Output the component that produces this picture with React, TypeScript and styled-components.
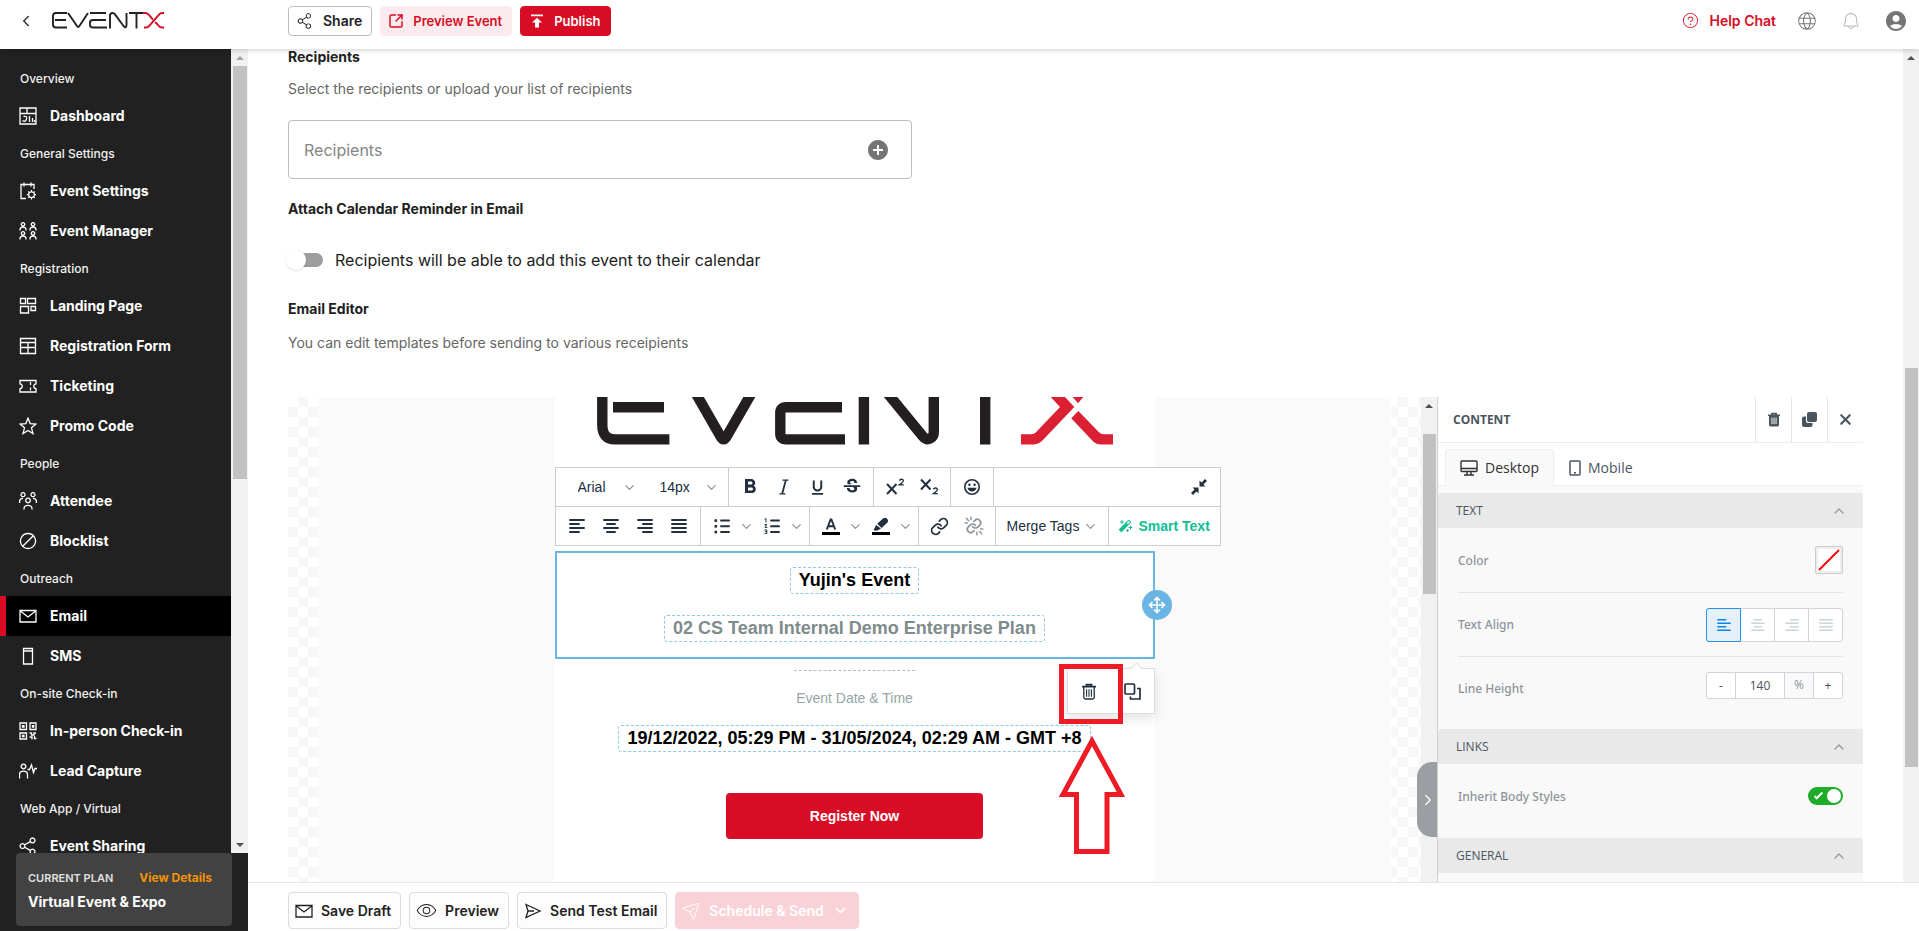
import React from 'react';
import styled, { createGlobalStyle, css } from 'styled-components';
import { ChevronDown, ChevronLeft, ChevronRight, ChevronUp, Link, X, SquareArrowOutUpRight } from 'lucide-react';
import { MdFormatBold, MdFormatUnderlined, MdStrikethroughS, MdAccountCircle, MdAddCircle } from 'react-icons/md';
import { PiBellLight, PiGlobeLight, PiQuestionLight, PiShareNetworkLight, PiPaperPlaneTiltLight, PiEyeLight, PiMagicWandFill } from 'react-icons/pi';

const ui = 'Inter, "DM Sans", sans-serif';
const arial = '"Liberation Sans", Arial, sans-serif';
const panelFont = '"Open Sans", "Noto Sans", sans-serif';
const red = '#d80c24';
const ink = '#222f3e';

const GlobalStyle = createGlobalStyle`
  *, *::before, *::after { box-sizing: border-box; }
  body { margin: 0; background: #fff; font-family: ${ui}; color: #212121; overflow: hidden; }
  button, input, select { font: inherit; color: inherit; }
  button { margin: 0; padding: 0; border: 0; background: none; cursor: pointer; }
  h2, h3, p { margin: 0; }
  svg { display: block; flex: none; }
`;

const Page = styled.div`
  display: flex;
  flex-direction: column;
  height: 100vh;
`;

/* ---------- header ---------- */
const Header = styled.header`
  position: relative;
  z-index: 2;
  display: flex;
  align-items: center;
  height: 49px;
  padding: 0 11px 8px 0;
  background: #fff;
  box-shadow: 0 1px 6px rgba(0, 0, 0, 0.2);
`;
const Brand = styled.div`
  display: flex;
  align-items: center;
  gap: 17px;
  width: 288px;
  padding-left: 17px;
  color: #333;
`;
const HeaderActions = styled.div`
  display: flex;
  gap: 8px;
  padding-top: 1px;
`;
const HeaderTools = styled.div`
  display: flex;
  align-items: center;
  gap: 23px;
  margin-left: auto;
  color: #757575;
`;
const IconButton = styled.button`
  display: flex;
`;
const HelpLink = styled.a`
  display: flex;
  align-items: center;
  gap: 9px;
  margin-right: -3px;
  color: ${red};
  font-size: 14px;
  font-weight: 600;
  line-height: 20px;
  text-decoration: none;
`;

type Tone = 'outline' | 'tint' | 'solid' | 'faded';
const tones = {
  outline: css`border: 1px solid #bdbdbd; background: #fff;`,
  tint: css`border: 1px solid #fcebee; background: #fcebee; color: ${red};`,
  solid: css`border: 1px solid ${red}; background: ${red}; color: #fff;`,
  faded: css`border: 1px solid #f8d2d7; background: #f8d2d7; color: #fff;`,
};
const ActionButton = styled.button<{ $tone: Tone; $tall?: boolean; $small?: boolean }>`
  display: flex;
  align-items: center;
  gap: ${p => (p.$tall ? 8 : 9)}px;
  height: ${p => (p.$tall ? 37 : 30)}px;
  padding: ${p => (p.$tall ? '0 9px 0 6px' : '0 9px 0 7px')};
  border-radius: 4px;
  font-size: ${p => (p.$small ? 13 : 14)}px;
  font-weight: 600;
  line-height: 20px;
  white-space: nowrap;
  ${p => tones[p.$tone]}
  ${p => p.$tall && p.$tone === 'outline' && css`border-color: #dcdcdc; background: #fdfdfd;`}
`;

/* ---------- sidebar ---------- */
const Body = styled.div`
  display: flex;
  flex: 1;
  min-height: 0;
`;
const Sidebar = styled.aside`
  display: flex;
  flex-direction: column;
  width: 248px;
  background: #212121;
`;
const NavRow = styled.div`
  display: flex;
  flex: 1;
  min-height: 0;
`;
const Nav = styled.nav`
  flex: 1;
  padding-top: 12px;
  overflow: hidden;
  color: #fff;
`;
const NavHeading = styled.h3`
  padding-left: 20px;
  font-size: 12px;
  font-weight: 500;
  line-height: 35px;
  color: #f2f2f2;
`;
const NavItem = styled.a<{ $active?: boolean }>`
  display: flex;
  align-items: center;
  gap: 13px;
  height: 40px;
  padding-left: ${p => (p.$active ? 13 : 19)}px;
  border-left: ${p => (p.$active ? `6px solid ${red}` : '0')};
  background: ${p => (p.$active ? '#000' : 'transparent')};
  color: #fff;
  font-size: 14px;
  font-weight: 700;
  line-height: 20px;
  text-decoration: none;
`;
const PlanArea = styled.div`
  height: 78px;
  padding: 0 16px 5px;
`;
const PlanCard = styled.div`
  display: flex;
  flex-direction: column;
  justify-content: center;
  gap: 4px;
  height: 73px;
  padding: 0 20px 0 12px;
  border-radius: 4px;
  background: #424242;
  color: #fff;
`;
const PlanTop = styled.div`
  display: flex;
  justify-content: space-between;
  align-items: center;
`;
const PlanLabel = styled.span`
  font-size: 11px;
  font-weight: 600;
  line-height: 20px;
  color: #e0e0e0;
`;
const PlanLink = styled.a`
  font-size: 12px;
  font-weight: 700;
  line-height: 20px;
  color: #f59300;
  text-decoration: none;
`;
const PlanName = styled.span`
  font-size: 14px;
  font-weight: 700;
  line-height: 20px;
`;

/* ---------- scroll bars ---------- */
const Track = styled.div<{ $wide?: boolean }>`
  display: flex;
  flex-direction: column;
  flex: none;
  width: ${p => (p.$wide ? 17 : 16)}px;
  background: #f1f1f1;
`;
const Arrow = styled.span<{ $down?: boolean; $dim?: boolean }>`
  height: 17px;
  display: flex;
  align-items: center;
  justify-content: center;
  &::after {
    content: '';
    border: 4px solid transparent;
    border-top-width: ${p => (p.$down ? 4 : 0)}px;
    border-bottom-width: ${p => (p.$down ? 0 : 4)}px;
    border-top-color: ${p => (p.$down ? '#505050' : 'transparent')};
    border-bottom-color: ${p => (p.$down ? 'transparent' : p.$dim ? '#a3a3a3' : '#505050')};
  }
`;
const Rail = styled.span<{ $grow: number }>`
  flex: ${p => p.$grow} 0 0;
`;
const Thumb = styled.span<{ $grow: number }>`
  flex: ${p => p.$grow} 0 0;
  margin: 0 1px 0 2px;
  background: #c1c1c1;
`;
interface ScrollTrackProps {
  before: number;
  thumb: number;
  after: number;
  wide?: boolean;
}
function ScrollTrack({ before, thumb, after, wide }: ScrollTrackProps) {
  return (
    <Track aria-hidden="true" $wide={wide}>
      <Arrow $dim={before === 0} />
      <Rail $grow={before} />
      <Thumb $grow={thumb} />
      <Rail $grow={after} />
      {wide && <Arrow $down />}
    </Track>
  );
}

/* ---------- main column ---------- */
const Main = styled.main`
  display: flex;
  flex-direction: column;
  flex: 1;
  min-width: 0;
`;
const ScrollArea = styled.div`
  display: flex;
  flex: 1;
  min-height: 0;
`;
const Content = styled.div`
  display: flex;
  flex-direction: column;
  flex: 1;
  min-width: 0;
  padding: 0 40px;
`;
const Field = styled.section`
  display: flex;
  flex-direction: column;
  align-items: flex-start;
  margin-bottom: 22px;
`;
const FieldTitle = styled.h2`
  font-size: 14px;
  font-weight: 700;
  line-height: 16px;
`;
const FieldHint = styled.p<{ $loose?: boolean }>`
  margin-top: ${p => (p.$loose ? 16 : 14)}px;
  font-size: 14px;
  line-height: 20px;
  color: #666;
`;
const RecipientsBox = styled.div`
  display: flex;
  align-items: center;
  width: 624px;
  height: 59px;
  margin-top: 21px;
  padding: 0 21px 0 15px;
  border: 1px solid #bdbdbd;
  border-radius: 4px;
  color: #757575;
`;
const RecipientsInput = styled.input`
  flex: 1;
  padding: 0;
  border: 0;
  outline: 0;
  background: none;
  font-size: 16px;
  line-height: 20px;
  &::placeholder { color: #858585; opacity: 1; }
`;
const SwitchLabel = styled.label`
  display: flex;
  align-items: center;
  gap: 12px;
  height: 20px;
  margin: 33px 0 9px;
  font-size: 16px;
  line-height: 20px;
`;
const Switch = styled.input`
  appearance: none;
  display: flex;
  align-items: center;
  width: 35px;
  height: 14px;
  margin: 0;
  border-radius: 7px;
  background: #9e9e9e;
  &::before {
    content: '';
    width: 20px;
    height: 20px;
    margin-left: -2px;
    border-radius: 50%;
    background: #fff;
    box-shadow: 0 1px 3px rgba(0, 0, 0, 0.12);
  }
`;

/* ---------- email editor ---------- */
const Editor = styled.section`
  display: flex;
  flex: 1;
  min-height: 0;
  margin-top: 22px;
  overflow: hidden;
`;
const Checker = styled.div`
  position: relative;
  display: flex;
  flex: 1;
  min-width: 0;
  padding: 0 30px;
  background: conic-gradient(#f7f7f7 0 25%, #fff 0 50%, #f7f7f7 0 75%, #fff 0) 0 0 / 20px 20px;
`;
const Backdrop = styled.div`
  display: flex;
  flex: 1;
  justify-content: center;
  background: #fafafa;
`;
const EmailBody = styled.div`
  position: relative;
  display: flex;
  flex-direction: column;
  align-items: center;
  width: 600px;
  background: #fff;
  font-family: ${arial};
`;
const SelectedBlock = styled.div`
  position: relative;
  display: flex;
  flex-direction: column;
  align-items: center;
  gap: 21px;
  align-self: stretch;
  flex: none;
  height: 108px;
  margin-top: 106px;
  padding-top: 14px;
  border: 2px solid #6bb5e5;
`;
const MergeField = styled.span<{ $muted?: boolean; $spaced?: boolean }>`
  margin-top: ${p => (p.$spaced ? 17 : 0)}px;
  padding: 0 8px;
  border: 1px dashed #8fc9ea;
  border-radius: 3px;
  font-size: 18px;
  font-weight: 700;
  line-height: 25px;
  color: ${p => (p.$muted ? '#7e8c8d' : '#000')};
`;
const MoveHandle = styled.button`
  position: absolute;
  right: -19px;
  top: 37px;
  display: flex;
  align-items: center;
  justify-content: center;
  width: 30px;
  height: 30px;
  border-radius: 50%;
  background: #6bb5e5;
  color: #fff;
`;
const BlockMenu = styled.div`
  position: absolute;
  right: -2px;
  top: 115px;
  display: flex;
  width: 88px;
  height: 46px;
  border: 1px solid #ddd;
  background: #fff;
  box-shadow: 0 4px 12px rgba(0, 0, 0, 0.12);
  color: ${ink};
  &::before {
    content: '';
    position: absolute;
    right: 13px;
    top: -5px;
    width: 9px;
    height: 9px;
    border: 1px solid #ddd;
    border-right: 0;
    border-bottom: 0;
    background: #fff;
    transform: rotate(45deg);
  }
`;
const MenuButton = styled.button`
  display: flex;
  flex: 1;
  align-items: center;
  justify-content: center;
`;
const DashedRule = styled.div`
  width: 121px;
  margin-top: 11px;
  border-top: 1px dashed #bbb;
`;
const DateCaption = styled.p`
  margin-top: 17px;
  font-size: 14px;
  line-height: 20px;
  color: #95a5a6;
`;
const RegisterButton = styled.button`
  width: 257px;
  height: 46px;
  margin-top: 41px;
  flex: none;
  border-radius: 4px;
  background: ${red};
  color: #fff;
  font-size: 14px;
  font-weight: 700;
  line-height: 20px;
`;
const Highlight = styled.div`
  position: absolute;
  left: 504px;
  top: 267px;
  width: 64px;
  height: 60px;
  border: 5px solid #ed1c24;
`;
const Pointer = styled.svg`
  position: absolute;
  left: 502px;
  top: 338px;
`;

/* text tool bar */
const TextToolbar = styled.div`
  position: absolute;
  left: 0;
  top: 70px;
  width: 666px;
  border: 1px solid #ccc;
  background: #fff;
  color: ${ink};
`;
const ToolRow = styled.div`
  display: flex;
  height: 38px;
  & + & { height: 39px; border-top: 1px solid #ccc; }
`;
const ToolGroup = styled.div<{ $fill?: boolean }>`
  display: flex;
  flex: ${p => (p.$fill ? '1' : 'none')};
  justify-content: ${p => (p.$fill ? 'flex-end' : 'flex-start')};
  padding: 0 4px;
  border-right: 1px solid #ccc;
  &:last-child { border-right: 0; }
`;
const Tool = styled.button<{ $disabled?: boolean }>`
  display: flex;
  align-items: center;
  justify-content: center;
  width: 34px;
  color: ${p => (p.$disabled ? '#909599' : 'inherit')};
`;
const ToolArrow = styled.button`
  display: flex;
  align-items: center;
  justify-content: center;
  width: 16px;
  color: #8d949b;
`;
const TextTool = styled.button<{ $accent?: boolean }>`
  display: flex;
  align-items: center;
  gap: ${p => (p.$accent ? 6 : 4)}px;
  width: 104px;
  padding-left: ${p => (p.$accent ? 4 : 7)}px;
  font-size: 14px;
  font-weight: ${p => (p.$accent ? 700 : 400)};
  line-height: 20px;
  white-space: nowrap;
  color: ${p => (p.$accent ? '#13bd92' : 'inherit')};
`;
const Picker = styled.span`
  display: grid;
  grid-template-columns: 1fr 24px;
  align-items: center;
  justify-items: center;
  width: 82px;
  color: #8d949b;
`;
const PickerSelect = styled.select`
  grid-area: 1 / 1 / 2 / 3;
  width: 100%;
  height: 38px;
  padding: 0 0 0 18px;
  border: 0;
  outline: 0;
  appearance: none;
  background: none;
  font-size: 14px;
  color: ${ink};
`;
const PickerArrow = styled(ChevronDown)`
  grid-area: 1 / 2;
  pointer-events: none;
`;

/* ---------- property panel ---------- */
const CollapseTab = styled.button`
  position: absolute;
  right: -16px;
  bottom: 45px;
  z-index: 1;
  display: flex;
  align-items: center;
  justify-content: center;
  width: 20px;
  height: 75px;
  padding-left: 2px;
  border-radius: 15px 0 0 15px;
  background: #9b9fa4;
  color: #fff;
`;
const Panel = styled.aside`
  display: flex;
  flex-direction: column;
  flex: none;
  width: 426px;
  border-left: 1px solid #d0d0d0;
  background: #f9f9f9;
  font-family: ${panelFont};
  color: #4a555f;
`;
const PanelHead = styled.div`
  display: flex;
  align-items: stretch;
  flex: none;
  height: 46px;
  border-bottom: 1px solid #eee;
  background: #fff;
`;
const PanelTitle = styled.h2`
  flex: 1;
  padding-left: 15px;
  font-size: 12px;
  font-weight: 700;
  line-height: 45px;
`;
const PanelAction = styled.button`
  display: flex;
  align-items: center;
  justify-content: center;
  width: 36px;
  border-left: 1px solid #e5e5e5;
`;
const Tabs = styled.div`
  display: flex;
  align-items: flex-end;
  flex: none;
  height: 43px;
  margin-bottom: 7px;
  padding-left: 7px;
  border-bottom: 1px solid #eee;
  background: #fff;
`;
const Tab = styled.button<{ $active?: boolean }>`
  display: flex;
  align-items: center;
  gap: 7px;
  height: 37px;
  margin-bottom: -1px;
  padding: 0 14px;
  border: 1px solid ${p => (p.$active ? '#eee' : 'transparent')};
  border-bottom: 0;
  border-radius: 4px 4px 0 0;
  background: ${p => (p.$active ? '#f9f9f9' : 'transparent')};
  font-size: 14px;
  line-height: 20px;
  color: ${p => (p.$active ? '#333' : '#4a555f')};
`;
const SectionHead = styled.button`
  display: flex;
  align-items: center;
  justify-content: space-between;
  flex: none;
  height: 35px;
  padding: 0 16px 0 18px;
  border-radius: 2px 2px 0 0;
  background: #e9e9e9;
  font-size: 12px;
  line-height: 20px;
`;
const Rows = styled.div<{ $end: number }>`
  flex: none;
  padding: 0 20px ${p => p.$end}px;
`;
const Property = styled.div`
  display: flex;
  align-items: center;
  justify-content: space-between;
  height: 64px;
  font-family: "Noto Sans", ${panelFont};
  font-size: 12px;
  font-weight: 500;
  color: #8d9499;
  & + & { border-top: 1px solid #e3e5e8; }
`;
const Swatch = styled.button`
  width: 28px;
  height: 28px;
  padding: 2px;
  border: 1px solid #ccc;
  border-radius: 2px;
  background: #eee;
`;
const Segments = styled.div`
  display: flex;
  height: 34px;
`;
const Segment = styled.button<{ $active?: boolean }>`
  display: flex;
  align-items: center;
  justify-content: center;
  width: 35px;
  margin-left: -1px;
  position: relative;
  z-index: ${p => (p.$active ? 1 : 0)};
  border: 1px solid ${p => (p.$active ? '#2490e6' : '#ced4da')};
  background: ${p => (p.$active ? '#e5f0f9' : '#fff')};
  color: ${p => (p.$active ? '#0b84ee' : '#ced4da')};
  &:first-child { border-radius: 3px 0 0 3px; }
  &:last-child { border-radius: 0 3px 3px 0; }
`;
const Stepper = styled.div`
  display: flex;
  height: 27px;
  margin-bottom: 6px;
  border: 1px solid #ced4da;
  border-radius: 3px;
  background: #fff;
  font-family: ${panelFont};
  font-weight: 400;
  color: #495057;
  overflow: hidden;
`;
const StepButton = styled.button`
  width: 28px;
`;
const StepInput = styled.input`
  width: 50px;
  padding: 0;
  border: solid #ced4da;
  border-width: 0 1px;
  outline: 0;
  text-align: center;
`;
const StepUnit = styled.span`
  width: 29px;
  border-right: 1px solid #ced4da;
  background: #f9f9f9;
  line-height: 24px;
  text-align: center;
  color: #8d9499;
`;
const GreenSwitch = styled.input`
  appearance: none;
  display: flex;
  align-items: center;
  justify-content: flex-end;
  width: 35px;
  height: 18px;
  margin: 0;
  border-radius: 9px;
  background: #1eac2a;
  &::before {
    content: '';
    width: 9px;
    height: 4px;
    margin: 0 4px 3px 0;
    border: solid #fff;
    border-width: 0 0 2px 2px;
    transform: rotate(-45deg);
  }
  &::after {
    content: '';
    width: 14px;
    height: 14px;
    margin-right: 2px;
    border-radius: 50%;
    background: #fff;
  }
`;

/* ---------- footer ---------- */
const Footer = styled.footer`
  display: flex;
  align-items: flex-start;
  gap: 8px;
  flex: none;
  height: 49px;
  padding: 9px 40px 0;
  border-top: 1px solid #e6e6e6;
  background: #fff;
`;

/* ---------- drawings ---------- */
const HeaderLogo = () => (
  <svg width="112" height="17" viewBox="0 0 112 17" fill="none" stroke="#222" strokeWidth="1.9" aria-label="EventX">
    <path d="M15 1H4Q1 1 1 4V12.5Q1 15.5 4 15.5H15M3 8H14" />
    <path d="M16 1L25 14Q26.2 16 27.4 14L36 1" />
    <path d="M38 1H54M54 8H41Q38 8 38 10.5V13Q38 15.5 41 15.5H55" />
    <path d="M58 16.5V3.5Q58 1 60.5 1Q62 1 63 2.4L71.5 14Q74.5 17 74.5 13V1" />
    <path d="M77 1H91M84.5 1V16.5" />
    <g stroke={red}>
      <path d="M92 15.5H94Q96 15.5 97 14.2L107 2.6Q108.2 1 110 1H112" />
      <path d="M91 1H93.5Q95.3 1 96.4 2.4L101 7.6M103.2 10L107 14.2Q108 15.5 110 15.5H112" />
    </g>
  </svg>
);

const EmailLogo = () => (
  <svg width="600" height="48" viewBox="0 0 600 48" fill="none" stroke="#231f20" strokeWidth="10.4" aria-label="EventX">
    <path d="M47.3 -2V28Q47.3 42.4 60 42.4H114.4M58 10.2H109" />
    <path d="M137.7 -9L165.4 39.2Q168.6 45.6 171.8 39.2L199.5 -9" />
    <path d="M287 10.2H231Q225.3 10.2 225.3 16V36.5Q225.3 42.4 231 42.4H290" />
    <path d="M308.9 -2V47.6M329 -8L368 39.5Q371.5 43.4 375.3 41.4Q378.8 39.5 378.8 35V-2M430.2 -2V47.6" />
    <g fill="#dc2034" stroke="none">
      <path d="M495.7 0H510L519.3 10L487.7 43.3Q483 47.6 478 47.6H466V37.3H476.7Q479 37.3 481 35.3L505 10Z" />
      <path d="M517.7 0H528.3L523 6.3Z" />
      <path d="M523.3 14L544 35.3Q546 37.3 548.3 37.3H558V47.6H546.7Q541 47.6 537.7 44L516.3 21.3Z" />
    </g>
  </svg>
);

const person = (x: number, y: number) => `M${x} ${y + 8.5}V${y + 7.5}Q${x} ${y + 5.2} ${x + 3} ${y + 5.2}T${x + 6} ${y + 7.5}V${y + 8.5}M${x + 3} ${y + 0.6}a1.7 1.7 0 1 0 .01 0`;
const navPaths: Record<string, string> = {
  dashboard: 'M1 1H17V17H1ZM1 6.5H17M8 1V6.5M3.5 13.5Q6.5 15.5 7.5 12T4.5 9.5M10.5 9V15M13.5 11V15M15.5 13V15',
  settings: 'M7 16.5H2V2.5H15V7M5 .5V4.5M12 .5V4.5M8 2.5H9M12.5 9.8a2.9 2.9 0 1 0 .01 0M12.5 8V9.8M12.5 15.6V17.4M7.9 12.7H9.6M15.4 12.7H17.1M9.3 9.5L10.5 10.7M15.7 9.5L14.5 10.7M9.3 15.9L10.5 14.7M15.7 15.9L14.5 14.7',
  manager: person(1, 0) + person(11, 0) + person(1, 9) + person(11, 9),
  landing: 'M1.5 1.5H6.5V6.5H1.5ZM8.5 1.5H16.5V6.5H8.5ZM1.5 9.5H9.5V16H1.5ZM12 9.5H16.5V13.5H12Z',
  form: 'M1.5 1.5H16.5V16.5H1.5ZM1.5 5.5H16.5M1.5 10.5H16.5M9 5.5V16.5',
  ticket: 'M1 3.5H17V6.8Q14.8 7 14.8 9.2T17 11.6V15H1V11.6Q3.2 11.4 3.2 9.2T1 6.8ZM11.5 5V8M11.5 10.5V13.5',
  star: 'M9 1.2L11.2 6.6L17 7L12.5 10.8L14 16.6L9 13.4L4 16.6L5.5 10.8L1 7L6.8 6.6Z',
  attendee: 'M4 .7a2 2 0 1 0 .01 0M14 .7a2 2 0 1 0 .01 0M9 6.2a2.3 2.3 0 1 0 .01 0M.6 11V9Q.8 6.6 4 6.4M17.4 11V9Q17.2 6.6 14 6.4M5 17.5V16.5Q5.2 13.4 9 13.4T13 16.5V17.5',
  block: 'M9 1.5a7.5 7.5 0 1 0 .01 0M14.3 3.7L3.7 14.3',
  mail: 'M1 3.5H17V15H1ZM1 3.8L9 10L17 3.8',
  sms: 'M4.5 1.5H13.5V17H4.5ZM4.5 4H13.5',
  qr: 'M1 1H7.5V7.5H1ZM11 1H17V7.5H11ZM1 11H7.5V17H1ZM3.5 3.7H5V5H3.5ZM13.5 3.7H14.7V5H13.5ZM3.5 13.5H5V14.7H3.5ZM10.5 11H12.5V13H15V11H17M10.5 15H13V17.4M15.5 14V16.5H17.5',
  lead: 'M4.5 2.2a2.3 2.3 0 1 0 .01 0M.5 16.5V12.5Q.6 9.2 4.5 9.2T8.5 12.5V16.5M8.5 7.5H10.5L12.5 3L14.5 10.5L16 6.5H18',
  share: 'M13.5 1a2.4 2.4 0 1 0 .01 0M3.5 6.6a2.4 2.4 0 1 0 .01 0M13.5 12.2a2.4 2.4 0 1 0 .01 0M5.6 7.8L11.4 4.6M5.6 10.2L11.4 13.4',
};
const NavIcon = ({ name }: { name: string }) => (
  <svg width="18" height="18" viewBox="0 0 18 18" fill="none" stroke="currentColor" strokeWidth="1.3">
    <path d={navPaths[name]} />
  </svg>
);

const alignLines = {
  left: ['1 15', '1 10', '1 15', '1 10'],
  center: ['1 15', '4 12', '1 15', '4 12'],
  right: ['1 15', '6 15', '1 15', '6 15'],
  justify: ['1 15', '1 15', '1 15', '1 15'],
};
type AlignKind = keyof typeof alignLines;
const AlignIcon = ({ kind, size = 16, flip }: { kind: AlignKind; size?: number; flip?: boolean }) => {
  const lines = alignLines[kind];
  return (
    <svg width={size} height={size} viewBox="0 0 16 16" stroke="currentColor" strokeWidth="1.9" strokeLinecap="round">
      {lines.map((_, i) => {
        const [a, b] = lines[flip ? 3 - i : i].split(' ');
        const y = 2 + i * 4;
        return <path key={i} d={`M${a} ${y}H${b}`} />;
      })}
    </svg>
  );
};
const ListIcon = ({ numbered }: { numbered?: boolean }) => (
  <svg width="16" height="16" viewBox="0 0 16 16" stroke="currentColor" strokeWidth="1.9" strokeLinecap="round" fill="none">
    <path d="M7 2.5H15M7 8.3H15M7 14H15" />
    {numbered ? (
      <path strokeWidth="1" d="M1 1L2 .6V4M.8 6.6H2.8L1 9.4H3M.8 12H2.8V13.6H1.5H2.8V15.4H.8" />
    ) : (
      <path strokeWidth="3" d="M1.8 2.5H1.81M1.8 8.3H1.81M1.8 14H1.81" />
    )}
  </svg>
);
const ItalicIcon = () => (
  <svg width="14" height="16" viewBox="0 0 14 16" fill="none" stroke="currentColor" strokeWidth="1.2">
    <path d="M5.5 1.2H11.5M2.5 14.8H8.5" />
    <path strokeWidth="1.8" d="M8.8 1.2L5.2 14.8" />
  </svg>
);
const ScriptIcon = ({ sub }: { sub?: boolean }) => (
  <svg width="20" height="20" viewBox="0 0 20 20" fill="none" stroke="currentColor" strokeWidth="2">
    <path d={sub ? 'M2 2.5L11.5 12.5M11.5 2.5L2 12.5' : 'M2 7L11.5 17M11.5 7L2 17'} />
    <path strokeWidth="1.3" d={sub ? 'M14.3 12.2Q16.5 10.2 18 11.6T14.3 16.7H18.8' : 'M14.3 3.4Q16.5 1.4 18 2.8T14.3 7.9H18.8'} />
  </svg>
);
const EmojiIcon = () => (
  <svg width="18" height="18" viewBox="0 0 18 18" fill="currentColor">
    <circle cx="9" cy="9" r="7.2" fill="none" stroke="currentColor" strokeWidth="1.6" />
    <circle cx="6.4" cy="6.8" r="1.2" />
    <circle cx="11.6" cy="6.8" r="1.2" />
    <path d="M4.5 9.8H13.5Q12.6 13.6 9 13.6T4.5 9.8Z" />
  </svg>
);
const CollapseIcon = () => (
  <svg width="16" height="16" viewBox="0 0 16 16" fill="currentColor">
    <path d="M1.5 8.5H7.5V14.5L5.4 12.4L2 16L0 14L3.6 10.6Z" />
    <path d="M14.5 7.5H8.5V1.5L10.6 3.6L14 0L16 2L12.4 5.4Z" />
  </svg>
);
const UnlinkIcon = () => (
  <svg width="20" height="20" viewBox="0 0 24 24" fill="none" stroke="currentColor" strokeWidth="2.2" strokeLinecap="round">
    <g transform="translate(2.4 2.4) scale(.8)" strokeWidth="2.6">
      <path d="M10 13a5 5 0 0 0 7.54.54l3-3a5 5 0 0 0-7.07-7.07l-1.72 1.71" />
      <path d="M14 11a5 5 0 0 0-7.54-.54l-3 3a5 5 0 0 0 7.07 7.07l1.71-1.71" />
    </g>
    <path strokeWidth="1.8" d="M8.5 1.5V4.5M2.8 2.8L5.6 5.6M1.5 8.5H4M15.5 22.5V19.5M21.2 21.2L18.6 18.6M22.5 15.5H20" />
  </svg>
);
const ColorIcon = ({ marker }: { marker?: boolean }) => (
  <svg width="18" height="18" viewBox="0 0 18 18" fill="currentColor">
    <path fill="#000" d="M0 15H18V18H0Z" />
    {marker ? (
      <path d="M1.5 13.5L4 8L9 11.5L5.5 13.5ZM5.2 6.8L11 1.4Q13.5 0 15.3 2T15 6L9.6 11Z" />
    ) : (
      <path fill="none" stroke="currentColor" strokeWidth="1.9" d="M4.8 12.5L8.6 2.5H9.4L13.2 12.5M6.2 9.2H11.8" />
    )}
  </svg>
);
const TrashIcon = ({ solid }: { solid?: boolean }) => (
  <svg width={solid ? 12 : 14} height={solid ? 15 : 17} viewBox="0 0 14 17" fill="none" stroke="currentColor" strokeWidth="1.3">
    <path strokeWidth="1.8" d="M0 3.6H14M4.5 3V1.6H9.5V3" />
    <path fill={solid ? 'currentColor' : 'none'} d="M1.8 4V14.5Q1.8 16 3.3 16H10.7Q12.2 16 12.2 14.5V4" />
    <path stroke={solid ? '#fff' : 'currentColor'} strokeWidth="1.1" d="M4.6 6.3V13.8M7 6.3V13.8M9.4 6.3V13.8" />
  </svg>
);
const CopyIcon = () => (
  <svg width="17" height="17" viewBox="0 0 17 17" fill="none" stroke="currentColor" strokeWidth="1.7">
    <rect x="1" y="1" width="9.5" height="10" rx="1" />
    <path d="M13 5.5H16V16H6.5V13.5" />
  </svg>
);
const CloneIcon = () => (
  <svg width="15" height="15" viewBox="0 0 15 15" fill="currentColor">
    <rect x="5" y="0" width="10" height="10" rx="2" />
    <path d="M4 4.5H2Q0 4.5 0 6.5V13Q0 15 2 15H8.5Q10.5 15 10.5 13V11H6Q4 11 4 9Z" />
  </svg>
);
const MoveIcon = () => (
  <svg width="18" height="18" viewBox="0 0 18 18" fill="none" stroke="currentColor" strokeWidth="1.6">
    <path d="M9 2V16M2 9H16M6 4.5L9 1.5L12 4.5M6 13.5L9 16.5L12 13.5M4.5 6L1.5 9L4.5 12M13.5 6L16.5 9L13.5 12" />
  </svg>
);
const PublishIcon = () => (
  <svg width="17" height="16" viewBox="-2 -1 17 16" fill="currentColor">
    <path d="M1 .5H13V2.3H1ZM7 3.8L12 8.5H9V13.5H5V8.5H2Z" />
  </svg>
);
const SendIcon = () => (
  <svg width="18" height="18" viewBox="0 0 18 18" fill="none" stroke="currentColor" strokeWidth="1.3">
    <path d="M2 2.5L16 9L2 15.5L4 9ZM4 9H10" />
  </svg>
);
const MonitorIcon = () => (
  <svg width="18" height="16" viewBox="0 0 18 16" fill="none" stroke="currentColor" strokeWidth="1.4">
    <rect x="1" y="1" width="16" height="10.5" rx="1" />
    <path d="M1 8.5H17M7 11.5V14.5M11 11.5V14.5M4 15H14" />
  </svg>
);
const PhoneIcon = () => (
  <svg width="12" height="16" viewBox="0 0 12 16" fill="none" stroke="currentColor" strokeWidth="1.5">
    <rect x="1" y="1" width="10" height="14" rx="1" />
    <path d="M5 12.8H7" />
  </svg>
);

const navGroups: [string, [string, string][]][] = [
  ['Overview', [['dashboard', 'Dashboard']]],
  ['General Settings', [['settings', 'Event Settings'], ['manager', 'Event Manager']]],
  ['Registration', [['landing', 'Landing Page'], ['form', 'Registration Form'], ['ticket', 'Ticketing'], ['star', 'Promo Code']]],
  ['People', [['attendee', 'Attendee'], ['block', 'Blocklist']]],
  ['Outreach', [['mail', 'Email'], ['sms', 'SMS']]],
  ['On-site Check-in', [['qr', 'In-person Check-in'], ['lead', 'Lead Capture']]],
  ['Web App / Virtual', [['share', 'Event Sharing']]],
];
const aligns: AlignKind[] = ['left', 'center', 'right', 'justify'];

const Dropdown = ({ label }: { label: string }) => (
  <ToolArrow aria-label={label}>
    <ChevronDown size={15} strokeWidth={2} />
  </ToolArrow>
);

function Toolbar() {
  return (
    <TextToolbar>
      <ToolRow>
        <ToolGroup>
          <Picker>
            <PickerSelect aria-label="Font family"><option>Arial</option></PickerSelect>
            <PickerArrow size={15} strokeWidth={2} />
          </Picker>
          <Picker>
            <PickerSelect aria-label="Font size"><option>14px</option></PickerSelect>
            <PickerArrow size={15} strokeWidth={2} />
          </Picker>
        </ToolGroup>
        <ToolGroup>
          <Tool aria-label="Bold"><MdFormatBold size={24} /></Tool>
          <Tool aria-label="Italic"><ItalicIcon /></Tool>
          <Tool aria-label="Underline"><MdFormatUnderlined size={19} /></Tool>
          <Tool aria-label="Strikethrough"><MdStrikethroughS size={22} /></Tool>
        </ToolGroup>
        <ToolGroup>
          <Tool aria-label="Superscript"><ScriptIcon /></Tool>
          <Tool aria-label="Subscript"><ScriptIcon sub /></Tool>
        </ToolGroup>
        <ToolGroup><Tool aria-label="Emoji"><EmojiIcon /></Tool></ToolGroup>
        <ToolGroup $fill><Tool aria-label="Collapse"><CollapseIcon /></Tool></ToolGroup>
      </ToolRow>
      <ToolRow>
        <ToolGroup>
          {aligns.map(a => <Tool key={a} aria-label={`Align ${a}`}><AlignIcon kind={a} /></Tool>)}
        </ToolGroup>
        <ToolGroup>
          <Tool aria-label="Bullet list"><ListIcon /></Tool>
          <Dropdown label="Bullet styles" />
          <Tool aria-label="Numbered list"><ListIcon numbered /></Tool>
          <Dropdown label="Number styles" />
        </ToolGroup>
        <ToolGroup>
          <Tool aria-label="Text color"><ColorIcon /></Tool>
          <Dropdown label="Text colors" />
          <Tool aria-label="Highlight color"><ColorIcon marker /></Tool>
          <Dropdown label="Highlight colors" />
        </ToolGroup>
        <ToolGroup>
          <Tool aria-label="Link"><Link size={19} strokeWidth={2.2} /></Tool>
          <Tool aria-label="Remove link" $disabled><UnlinkIcon /></Tool>
        </ToolGroup>
        <ToolGroup>
          <TextTool>Merge Tags<ChevronDown size={15} strokeWidth={2} color="#8d949b" /></TextTool>
        </ToolGroup>
        <ToolGroup>
          <TextTool $accent><PiMagicWandFill size={16} />Smart Text</TextTool>
        </ToolGroup>
      </ToolRow>
    </TextToolbar>
  );
}

function EmailCanvas() {
  return (
    <Checker>
      <Backdrop>
        <EmailBody>
          <EmailLogo />
          <SelectedBlock>
            <MergeField>Yujin's Event</MergeField>
            <MergeField $muted>02 CS Team Internal Demo Enterprise Plan</MergeField>
            <MoveHandle aria-label="Move"><MoveIcon /></MoveHandle>
            <BlockMenu>
              <MenuButton aria-label="Delete"><TrashIcon /></MenuButton>
              <MenuButton aria-label="Duplicate"><CopyIcon /></MenuButton>
            </BlockMenu>
          </SelectedBlock>
          <DashedRule />
          <DateCaption>Event Date &amp; Time</DateCaption>
          <MergeField $spaced>19/12/2022, 05:29 PM - 31/05/2024, 02:29 AM - GMT +8</MergeField>
          <RegisterButton>Register Now</RegisterButton>
          <Toolbar />
          <Highlight />
          <Pointer width="68" height="120" viewBox="0 0 68 120" fill="none" stroke="#ed1c24" strokeWidth="5">
            <path d="M35 6L6 59.5H19.5V116.5H50V59.5H64Z" />
          </Pointer>
        </EmailBody>
      </Backdrop>
      <CollapseTab aria-label="Hide panel"><ChevronRight size={18} strokeWidth={1.6} /></CollapseTab>
    </Checker>
  );
}

function Section({ title }: { title: string }) {
  return (
    <SectionHead>
      {title}
      <ChevronUp size={16} strokeWidth={2} color="#999" />
    </SectionHead>
  );
}

function PropertyPanel() {
  return (
    <Panel>
      <PanelHead>
        <PanelTitle>CONTENT</PanelTitle>
        <PanelAction aria-label="Delete"><TrashIcon solid /></PanelAction>
        <PanelAction aria-label="Duplicate"><CloneIcon /></PanelAction>
        <PanelAction aria-label="Close"><X size={17} strokeWidth={3} /></PanelAction>
      </PanelHead>
      <Tabs role="tablist">
        <Tab role="tab" aria-selected="true" $active><MonitorIcon />Desktop</Tab>
        <Tab role="tab" aria-selected="false"><PhoneIcon />Mobile</Tab>
      </Tabs>
      <Section title="TEXT" />
      <Rows $end={9}>
        <Property>
          Color
          <Swatch aria-label="Color">
            <svg width="22" height="22" viewBox="0 0 22 22">
              <path fill="#fff" d="M0 0H22V22H0Z" />
              <path stroke="#f00" strokeWidth="2" d="M1 21L21 1" />
            </svg>
          </Swatch>
        </Property>
        <Property>
          Text Align
          <Segments>
            {aligns.map((a, i) => (
              <Segment key={a} aria-label={a} $active={i === 0}><AlignIcon kind={a} size={14} flip /></Segment>
            ))}
          </Segments>
        </Property>
        <Property>
          <label htmlFor="line-height">Line Height</label>
          <Stepper>
            <StepButton aria-label="Decrease">-</StepButton>
            <StepInput id="line-height" defaultValue="140" />
            <StepUnit>%</StepUnit>
            <StepButton aria-label="Increase">+</StepButton>
          </Stepper>
        </Property>
      </Rows>
      <Section title="LINKS" />
      <Rows $end={10}>
        <Property>
          <label htmlFor="inherit">Inherit Body Styles</label>
          <GreenSwitch id="inherit" type="checkbox" defaultChecked />
        </Property>
      </Rows>
      <Section title="GENERAL" />
    </Panel>
  );
}

export default function App() {
  return (
    <Page>
      <GlobalStyle />
      <Header>
        <Brand>
          <IconButton aria-label="Back"><ChevronLeft size={18} /></IconButton>
          <HeaderLogo />
        </Brand>
        <HeaderActions>
          <ActionButton $tone="outline"><PiShareNetworkLight size={18} />Share</ActionButton>
          <ActionButton $tone="tint" $small><SquareArrowOutUpRight size={16} strokeWidth={2.2} />Preview Event</ActionButton>
          <ActionButton $tone="solid" $small><PublishIcon />Publish</ActionButton>
        </HeaderActions>
        <HeaderTools>
          <HelpLink href="#help"><PiQuestionLight size={19} />Help Chat</HelpLink>
          <IconButton aria-label="Language"><PiGlobeLight size={22} /></IconButton>
          <IconButton aria-label="Notifications"><PiBellLight size={20} color="#b5b5b5" /></IconButton>
          <IconButton aria-label="Account"><MdAccountCircle size={24} /></IconButton>
        </HeaderTools>
      </Header>
      <Body>
        <Sidebar>
          <NavRow>
            <Nav>
              {navGroups.map(([heading, items]) => (
                <React.Fragment key={heading}>
                  <NavHeading>{heading}</NavHeading>
                  {items.map(([icon, label]) => (
                    <NavItem key={label} href={`#${icon}`} $active={icon === 'mail'}>
                      <NavIcon name={icon} />
                      {label}
                    </NavItem>
                  ))}
                </React.Fragment>
              ))}
            </Nav>
            <ScrollTrack before={0} thumb={413} after={357} wide />
          </NavRow>
          <PlanArea>
            <PlanCard>
              <PlanTop>
                <PlanLabel>CURRENT PLAN</PlanLabel>
                <PlanLink href="#plan">View Details</PlanLink>
              </PlanTop>
              <PlanName>Virtual Event &amp; Expo</PlanName>
            </PlanCard>
          </PlanArea>
        </Sidebar>
        <Main>
          <ScrollArea>
            <Content>
              <Field>
                <FieldTitle>Recipients</FieldTitle>
                <FieldHint>Select the recipients or upload your list of recipients</FieldHint>
                <RecipientsBox>
                  <RecipientsInput aria-label="Recipients" placeholder="Recipients" />
                  <IconButton aria-label="Add recipients"><MdAddCircle size={24} /></IconButton>
                </RecipientsBox>
              </Field>
              <Field>
                <FieldTitle>Attach Calendar Reminder in Email</FieldTitle>
                <SwitchLabel>
                  <Switch type="checkbox" />
                  Recipients will be able to add this event to their calendar
                </SwitchLabel>
              </Field>
              <Field>
                <FieldTitle>Email Editor</FieldTitle>
                <FieldHint $loose>You can edit templates before sending to various receipients</FieldHint>
              </Field>
              <Editor>
                <EmailCanvas />
                <ScrollTrack before={20} thumb={160} after={288} />
                <PropertyPanel />
              </Editor>
            </Content>
            <ScrollTrack before={302} thumb={399} after={115} />
          </ScrollArea>
          <Footer>
            <ActionButton $tone="outline" $tall><NavIcon name="mail" />Save Draft</ActionButton>
            <ActionButton $tone="outline" $tall><PiEyeLight size={21} />Preview</ActionButton>
            <ActionButton $tone="outline" $tall><SendIcon />Send Test Email</ActionButton>
            <ActionButton $tone="faded" $tall disabled>
              <PiPaperPlaneTiltLight size={19} />
              Schedule &amp; Send
              <ChevronDown size={17} />
            </ActionButton>
          </Footer>
        </Main>
      </Body>
    </Page>
  );
}
